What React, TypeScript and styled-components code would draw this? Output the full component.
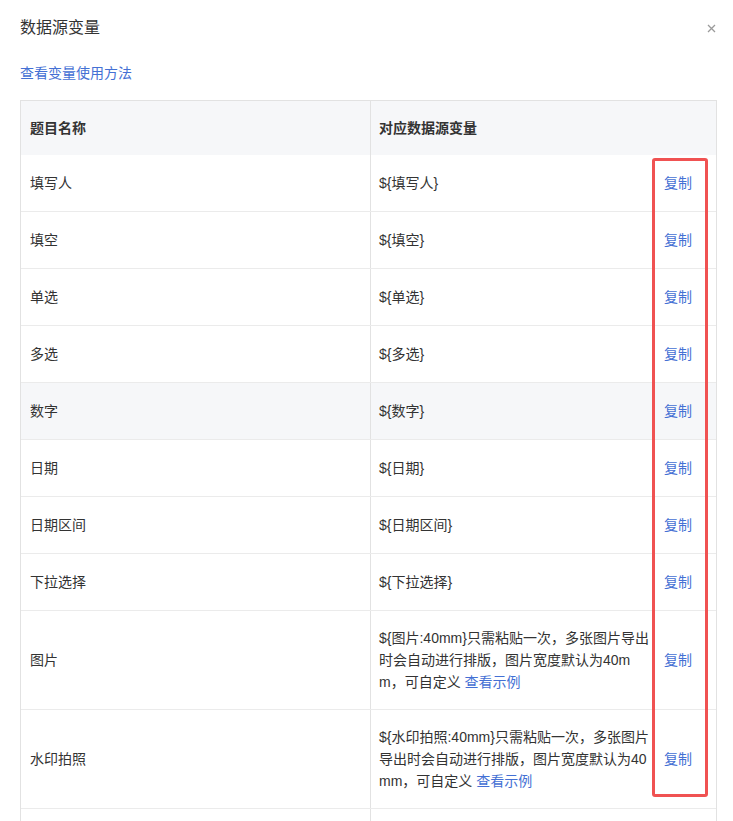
import React from "react";
import styled, { createGlobalStyle } from "styled-components";

const GlobalStyle = createGlobalStyle`
  html, body {
    margin: 0;
    padding: 0;
    background: #fff;
    overflow: hidden;
  }
  body {
    font-family: "Liberation Sans", "Noto Sans CJK SC", sans-serif;
    color: #333;
  }
`;

const Container = styled.div`
  height: 100vh;
  overflow: hidden;
  padding: 16px 16px 0 20px;
  box-sizing: border-box;
`;

const Header = styled.div`
  display: flex;
  justify-content: space-between;
  align-items: center;
  height: 24px;
`;

const Title = styled.div`
  font-size: 16px;
  line-height: 24px;
  color: #333;
`;

const Close = styled.div`
  width: 14px;
  height: 14px;
  display: flex;
  align-items: center;
  justify-content: center;
  color: #9a9a9a;
  margin-right: -1px;
  cursor: pointer;
`;

const HelpLink = styled.a`
  display: inline-block;
  margin-top: 22px;
  font-size: 14px;
  line-height: 22px;
  color: #4470d4;
  cursor: pointer;
`;

const Table = styled.div`
  position: relative;
  margin-top: 16px;
  border: 1px solid #e2e2e2;
  border-bottom: none;
`;

const Row = styled.div<{ head?: boolean; hover?: boolean }>`
  display: grid;
  grid-template-columns: 349px 1fr;
  min-height: ${(p) => (p.head ? "54px" : "56px")};
  background: ${(p) => (p.head || p.hover ? "#f6f7f9" : "#fff")};
  border-bottom: ${(p) => (p.head ? "none" : "1px solid #ebebeb")};
  font-size: 14px;
  line-height: 22px;
  font-weight: ${(p) => (p.head ? 700 : 400)};
`;

const NameCell = styled.div`
  display: flex;
  align-items: center;
  padding: 16px 9px;
`;

const VarCell = styled.div`
  display: flex;
  align-items: center;
  gap: 11px;
  padding: 16px 8px;
  border-left: 1px solid #e2e2e2;
`;

const VarText = styled.div`
  width: 274px;
  word-break: break-all;
`;

const Link = styled.span`
  color: #4470d4;
  cursor: pointer;
`;

const Mark = styled.div`
  position: absolute;
  left: 631px;
  top: 57px;
  width: 56px;
  height: 639px;
  box-sizing: border-box;
  border: 3px solid #f05252;
  border-radius: 3px;
  pointer-events: none;
`;

interface IRow {
  name: string;
  text: string;
  example?: boolean;
}

const rows: IRow[] = [
  { name: "填写人", text: "${填写人}" },
  { name: "填空", text: "${填空}" },
  { name: "单选", text: "${单选}" },
  { name: "多选", text: "${多选}" },
  { name: "数字", text: "${数字}" },
  { name: "日期", text: "${日期}" },
  { name: "日期区间", text: "${日期区间}" },
  { name: "下拉选择", text: "${下拉选择}" },
  {
    name: "图片",
    text: "${图片:40mm}只需粘贴一次，多张图片导出时会自动进行排版，图片宽度默认为40mm，可自定义 ",
    example: true,
  },
  {
    name: "水印拍照",
    text: "${水印拍照:40mm}只需粘贴一次，多张图片导出时会自动进行排版，图片宽度默认为40mm，可自定义 ",
    example: true,
  },
];

const App = () => {
  return (
    <>
      <GlobalStyle />
      <Container>
        <Header>
          <Title>数据源变量</Title>
          <Close>
            <svg width="9" height="9" viewBox="0 0 9 9">
              <path
                d="M1 1 L8 8 M8 1 L1 8"
                stroke="currentColor"
                strokeWidth="1.3"
                fill="none"
              />
            </svg>
          </Close>
        </Header>
        <HelpLink>查看变量使用方法</HelpLink>
        <Table>
          <Row head>
            <NameCell>题目名称</NameCell>
            <VarCell>对应数据源变量</VarCell>
          </Row>
          {rows.map((row) => (
            <Row key={row.name} hover={row.name === "数字"}>
              <NameCell>{row.name}</NameCell>
              <VarCell>
                <VarText>
                  {row.text}
                  {row.example ? <Link>查看示例</Link> : null}
                </VarText>
                <Link>复制</Link>
              </VarCell>
            </Row>
          ))}
          <Row>
            <NameCell />
            <VarCell />
          </Row>
          <Mark />
        </Table>
      </Container>
    </>
  );
};

export default App;
